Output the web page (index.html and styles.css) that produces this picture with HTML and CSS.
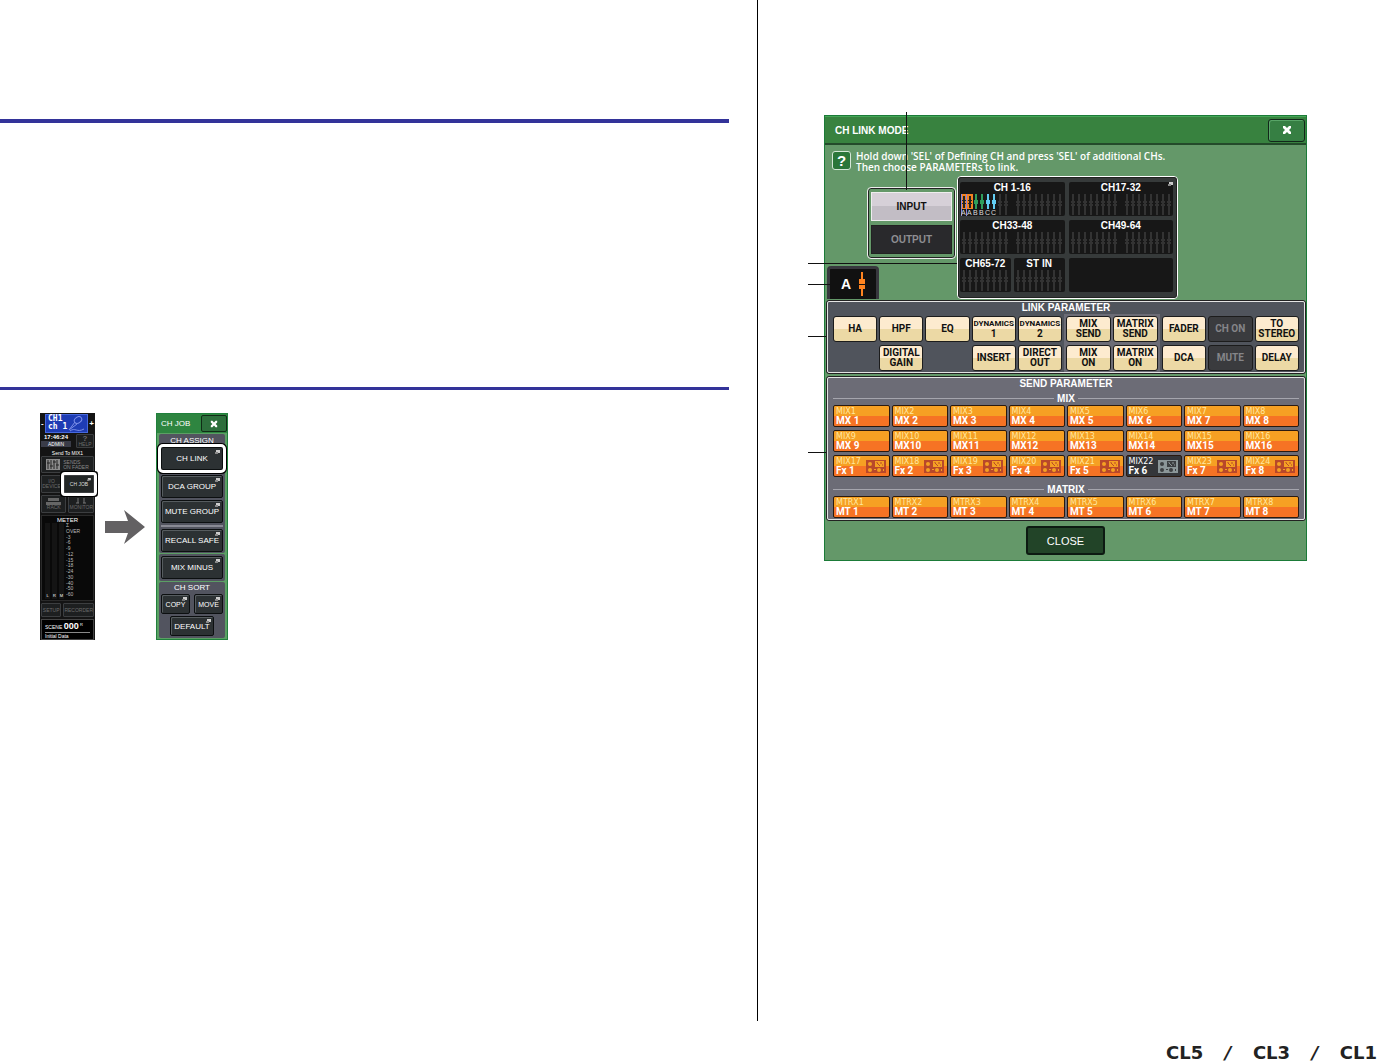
FILE: index.html
```html
<!DOCTYPE html>
<html lang="en">

<head>
    <meta charset="UTF-8">
    <meta name="viewport" content="width=device-width, initial-scale=1.0">
    <title>CH LINK MODE</title>

    <link rel="stylesheet" href="styles.css">
</head>

<body>
    <!-- shared shapes -->
    <svg class="defs" width="0" height="0" aria-hidden="true">
        <symbol id="fader" viewBox="0 0 6 21">
            <path d="M2 0h2v21H2z" fill="currentColor" />
            <path d="M1 7h4v2H1zM1 10h4v2H1z" fill="currentColor" />
        </symbol>
        <symbol id="faders" viewBox="0 0 48 21">
            <use href="#fader" x="0" width="6" height="21" />
            <use href="#fader" x="6" width="6" height="21" />
            <use href="#fader" x="12" width="6" height="21" />
            <use href="#fader" x="18" width="6" height="21" />
            <use href="#fader" x="24" width="6" height="21" />
            <use href="#fader" x="30" width="6" height="21" />
            <use href="#fader" x="36" width="6" height="21" />
            <use href="#fader" x="42" width="6" height="21" />
        </symbol>
        <symbol id="cross" viewBox="0 0 10 10">
            <path d="M1 1h2l2 2 2-2h2v2L7 5l2 2v2H7L5 7 3 9H1V7l2-2-2-2z" fill="#fff" />
        </symbol>
        <symbol id="popup" viewBox="0 0 5 4">
            <path d="M1 0h4v3H1z" fill="#ccc" /><path d="M0 2h3v2H0z" fill="#888" />
        </symbol>
        <symbol id="fx" viewBox="0 0 20 13">
            <path d="M0 0h20v13H0z" fill="currentColor" />
            <path d="M9 1h9v6H9z" fill="var(--knob)" />
            <path d="M11 2v1l3 3M15 2v2M16 5h1" fill="none" stroke="currentColor" />
            <g fill="var(--knob)">
                <circle cx="4" cy="4" r="2" /><circle cx="4" cy="10" r="2" />
                <circle cx="13" cy="10" r="2" /><path d="M8 9h2v1H8zM17 9h1v2h-1z" />
            </g>
        </symbol>
    </svg>

    <main class="page">
        <section class="column column--left">
            <hr class="rule rule--first">
            <hr class="rule rule--second">

            <div class="steps">
                <!-- function access area -->
                <div class="access">
                    <div class="access__channel">
                        <span>-</span>
                        <div class="access__name">CH1<br>ch 1
                            <svg class="access__mic" width="18" height="16" viewBox="0 0 18 16" fill="none" stroke="#7c8fe8">
                                <ellipse cx="10" cy="4" rx="4" ry="3" transform="rotate(-35 10 4)" />
                                <path d="M7 6L1 14l8-6M2 15c5-4 7 2 14-2" />
                            </svg>
                        </div>
                        <span>+</span>
                    </div>
                    <div class="access__status">
                        <div>
                            <div class="access__time">17:46:24</div>
                            <div class="access__user">ADMIN</div>
                        </div>
                        <button class="mini mini--help"><b>?</b>HELP</button>
                    </div>
                    <div class="access__send">Send To MIX1</div>
                    <button class="mini mini--sends">
                        <svg width="14" height="11" viewBox="0 0 14 11"><path d="M0 0h14v11H0z" fill="#8b8b8b" /><path d="M2 1v9M5 1v9M8 1v9M11 1v9M1 4h3M4 7h3M7 3h3M10 6h3" stroke="#222" /></svg>
                        <span>SENDS<br>ON FADER</span>
                    </button>
                    <div class="access__pair">
                        <button class="mini">I/O<br>DEVICE</button>
                        <button class="mini mini--job">CH JOB<svg class="popup" width="4" height="3"><use href="#popup" /></svg></button>
                    </div>
                    <div class="access__pair">
                        <button class="mini"><svg width="15" height="7" viewBox="0 0 15 7"><path d="M2 0h11v3H2zM0 4h15v3H0z" fill="#666" /></svg>RACK</button>
                        <button class="mini"><svg width="12" height="7" viewBox="0 0 12 7"><path d="M3 0v5M9 0v5M1 5h3M8 5h3" stroke="#777" fill="none" /></svg>MONITOR</button>
                    </div>
                    <div class="meter">
                        <div class="meter__title">METER</div>
                        <div class="meter__body">
                            <div class="meter__bar">L</div>
                            <div class="meter__bar">R</div>
                            <div class="meter__bar">M</div>
                            <div class="meter__scale">
                                <span>Σ</span><span>OVER</span><span>-3</span><span>-6</span><span>-9</span><span>-12</span><span>-15</span><span>-18</span><span>-24</span><span>-30</span><span>-40</span><span>-50</span><span>-60</span>
                            </div>
                        </div>
                    </div>
                    <div class="access__pair access__pair--low">
                        <button class="mini">SETUP</button>
                        <button class="mini">RECORDER</button>
                    </div>
                    <div class="scene">
                        <div class="scene__number">SCENE <b>000</b> <sup>R</sup></div>
                        <div>Initial Data</div>
                    </div>
                </div>

                <svg class="steps__arrow" width="41" height="34" viewBox="0 0 41 34">
                    <path d="M0 11h23L19 0l21 17-21 17 4-11H0z" fill="#636163" />
                </svg>

                <!-- CH JOB menu -->
                <div class="job">
                    <div class="job__bar">
                        <span>CH JOB</span>
                        <button class="job__close" aria-label="Close menu"><svg width="8" height="8"><use href="#cross" /></svg></button>
                    </div>
                    <div class="job__group job__group--assign">
                        <div class="job__label">CH ASSIGN</div>
                        <button class="key key--marked">CH LINK<svg class="popup" width="5" height="4"><use href="#popup" /></svg></button>
                        <button class="key">DCA GROUP<svg class="popup" width="5" height="4"><use href="#popup" /></svg></button>
                        <button class="key">MUTE GROUP<svg class="popup" width="5" height="4"><use href="#popup" /></svg></button>
                        <div class="job__divider"></div>
                        <button class="key">RECALL SAFE<svg class="popup" width="5" height="4"><use href="#popup" /></svg></button>
                    </div>
                    <div class="job__group">
                        <button class="key">MIX MINUS<svg class="popup" width="5" height="4"><use href="#popup" /></svg></button>
                    </div>
                    <div class="job__group">
                        <div class="job__label">CH SORT</div>
                        <div class="job__pair">
                            <button class="key key--short">COPY<svg class="popup" width="5" height="4"><use href="#popup" /></svg></button>
                            <button class="key key--short">MOVE<svg class="popup" width="5" height="4"><use href="#popup" /></svg></button>
                        </div>
                        <button class="key key--default">DEFAULT<svg class="popup" width="5" height="4"><use href="#popup" /></svg></button>
                    </div>
                </div>
            </div>
        </section>

        <section class="column column--right">
            <div class="figure">
                <div class="dialog">
                    <header class="dialog__bar">
                        <span>CH LINK MODE</span>
                        <button class="dialog__x" aria-label="Close window"><svg width="10" height="10"><use href="#cross" /></svg></button>
                    </header>

                    <div class="hint">
                        <span class="hint__icon">?</span>
                        <p class="hint__text">Hold down 'SEL' of Defining CH and press 'SEL' of additional CHs.<br>Then choose PARAMETERs to link.</p>
                    </div>

                    <div class="select">
                        <div class="select__side">
                            <div class="switch">
                                <button class="switch__item switch__item--on">INPUT</button>
                                <button class="switch__item">OUTPUT</button>
                            </div>
                            <div class="tab">A
                                <svg width="6" height="24" viewBox="0 0 6 24"><path d="M2 0h2v24H2z" fill="#ff8420" /><path d="M0 7h6v5H0zM0 13h6v4H0z" fill="#ff8420" /><path d="M0 12h6v1H0z" fill="#111" /></svg>
                            </div>
                        </div>
                        <div class="overview">
                            <div class="bank">
                                <div>CH 1-16</div>
                                <div class="bank__strips">
                                    <svg width="48" height="22" viewBox="0 0 48 22">
                                        <path d="M0 0h12v15H0z" fill="#f58220" />
                                        <path d="M5 0h1v22H5zM0 0h1v22H0z" fill="#8c86d8" />
                                        <path d="M2 2h2v12H2zM8 2h2v12H8zM1 6h4v1H1zM7 6h4v1H7zM1 9h4v1H1zM7 9h4v1H7z" fill="#222" />
                                        <path d="M14 0h2v15h-2zM13 6h4v4h-4zM20 0h2v15h-2zM19 6h4v4h-4z" fill="#2f9e5b" />
                                        <path d="M26 0h2v15h-2zM25 6h4v4h-4zM32 0h2v15h-2zM31 6h4v4h-4z" fill="#62cdf2" />
                                        <g color="#333"><use href="#fader" x="36" width="6" height="21" /><use href="#fader" x="42" width="6" height="21" /></g>
                                        <g fill="#ddd" class="bank__letters"><text x="0" y="21">A</text><text x="6" y="21">A</text><text x="12" y="21">B</text><text x="18" y="21">B</text><text x="24" y="21">C</text><text x="30" y="21">C</text></g>
                                    </svg>
                                    <svg width="48" height="21"><use href="#faders" /></svg>
                                </div>
                            </div>
                            <div class="bank">
                                <div>CH17-32</div>
                                <div class="bank__strips"><svg width="48" height="21"><use href="#faders" /></svg><svg width="48" height="21"><use href="#faders" /></svg></div>
                                <svg class="popup" width="5" height="4"><use href="#popup" /></svg>
                            </div>
                            <div class="bank">
                                <div>CH33-48</div>
                                <div class="bank__strips"><svg width="48" height="21"><use href="#faders" /></svg><svg width="48" height="21"><use href="#faders" /></svg></div>
                            </div>
                            <div class="bank">
                                <div>CH49-64</div>
                                <div class="bank__strips"><svg width="48" height="21"><use href="#faders" /></svg><svg width="48" height="21"><use href="#faders" /></svg></div>
                            </div>
                            <div class="overview__half">
                                <div class="bank">
                                    <div>CH65-72</div>
                                    <div class="bank__strips"><svg width="48" height="21"><use href="#faders" /></svg></div>
                                </div>
                                <div class="bank">
                                    <div>ST IN</div>
                                    <div class="bank__strips"><svg width="48" height="21"><use href="#faders" /></svg></div>
                                </div>
                            </div>
                            <div class="bank"></div>
                        </div>
                    </div>

                    <div class="panel panel--link">
                        <h2 class="panel__title">LINK PARAMETER</h2>
                        <div class="params">
                            <div class="params__group params__group--five">
                                <button class="param">HA</button>
                                <button class="param">HPF</button>
                                <button class="param">EQ</button>
                                <button class="param"><span class="param__long">DYNAMICS</span>1</button>
                                <button class="param"><span class="param__long">DYNAMICS</span>2</button>
                                <span></span>
                                <button class="param">DIGITAL<br>GAIN</button>
                                <span></span>
                                <button class="param">INSERT</button>
                                <button class="param">DIRECT<br>OUT</button>
                            </div>
                            <div class="params__group params__group--two">
                                <button class="param">MIX<br>SEND</button>
                                <button class="param">MATRIX<br>SEND</button>
                                <button class="param">MIX<br>ON</button>
                                <button class="param">MATRIX<br>ON</button>
                            </div>
                            <div class="params__group params__group--three">
                                <button class="param">FADER</button>
                                <button class="param param--off">CH ON</button>
                                <button class="param">TO<br>STEREO</button>
                                <button class="param">DCA</button>
                                <button class="param param--off">MUTE</button>
                                <button class="param">DELAY</button>
                            </div>
                        </div>
                    </div>

                    <div class="panel panel--send">
                        <h2 class="panel__title">SEND PARAMETER</h2>
                        <h3 class="panel__line">MIX</h3>
                        <div class="sends">
                            <button class="send"><span>MIX1</span><b>MX 1</b></button>
                            <button class="send"><span>MIX2</span><b>MX 2</b></button>
                            <button class="send"><span>MIX3</span><b>MX 3</b></button>
                            <button class="send"><span>MIX4</span><b>MX 4</b></button>
                            <button class="send"><span>MIX5</span><b>MX 5</b></button>
                            <button class="send"><span>MIX6</span><b>MX 6</b></button>
                            <button class="send"><span>MIX7</span><b>MX 7</b></button>
                            <button class="send"><span>MIX8</span><b>MX 8</b></button>
                            <button class="send"><span>MIX9</span><b>MX 9</b></button>
                            <button class="send"><span>MIX10</span><b>MX10</b></button>
                            <button class="send"><span>MIX11</span><b>MX11</b></button>
                            <button class="send"><span>MIX12</span><b>MX12</b></button>
                            <button class="send"><span>MIX13</span><b>MX13</b></button>
                            <button class="send"><span>MIX14</span><b>MX14</b></button>
                            <button class="send"><span>MIX15</span><b>MX15</b></button>
                            <button class="send"><span>MIX16</span><b>MX16</b></button>
                            <button class="send"><span>MIX17</span><b>Fx 1</b><svg class="send__fx" width="20" height="13"><use href="#fx" /></svg></button>
                            <button class="send"><span>MIX18</span><b>Fx 2</b><svg class="send__fx" width="20" height="13"><use href="#fx" /></svg></button>
                            <button class="send"><span>MIX19</span><b>Fx 3</b><svg class="send__fx" width="20" height="13"><use href="#fx" /></svg></button>
                            <button class="send"><span>MIX20</span><b>Fx 4</b><svg class="send__fx" width="20" height="13"><use href="#fx" /></svg></button>
                            <button class="send"><span>MIX21</span><b>Fx 5</b><svg class="send__fx" width="20" height="13"><use href="#fx" /></svg></button>
                            <button class="send send--off"><span>MIX22</span><b>Fx 6</b><svg class="send__fx" width="20" height="13"><use href="#fx" /></svg></button>
                            <button class="send"><span>MIX23</span><b>Fx 7</b><svg class="send__fx" width="20" height="13"><use href="#fx" /></svg></button>
                            <button class="send"><span>MIX24</span><b>Fx 8</b><svg class="send__fx" width="20" height="13"><use href="#fx" /></svg></button>
                        </div>
                        <h3 class="panel__line panel__line--matrix">MATRIX</h3>
                        <div class="sends">
                            <button class="send"><span>MTRX1</span><b>MT 1</b></button>
                            <button class="send"><span>MTRX2</span><b>MT 2</b></button>
                            <button class="send"><span>MTRX3</span><b>MT 3</b></button>
                            <button class="send"><span>MTRX4</span><b>MT 4</b></button>
                            <button class="send"><span>MTRX5</span><b>MT 5</b></button>
                            <button class="send"><span>MTRX6</span><b>MT 6</b></button>
                            <button class="send"><span>MTRX7</span><b>MT 7</b></button>
                            <button class="send"><span>MTRX8</span><b>MT 8</b></button>
                        </div>
                    </div>

                    <button class="dialog__close">CLOSE</button>
                </div>

                <!-- callout lines over the dialog -->
                <i class="callout callout--switch"></i>
                <i class="callout callout--overview"></i>
                <i class="callout callout--tab"></i>
                <i class="callout callout--link"></i>
                <i class="callout callout--send"></i>
            </div>
        </section>
    </main>

    <footer class="footer">
        <div class="brand"><span>CL5</span><i>/</i><span>CL3</span><i>/</i><span>CL1</span></div>
    </footer>
</body>

</html>
```
FILE: styles.css
```css
* {
    box-sizing: border-box;
}

body {
    margin: 0;
    background: #fff;
    font-family: "Liberation Sans", Arial, sans-serif;
    color: #fff;
}

button {
    margin: 0;
    padding: 0;
    font-family: inherit;
    color: inherit;
    cursor: pointer;
}

h2, h3, p {
    margin: 0;
}

svg {
    display: block;
}

.defs {
    position: absolute;
}

.page {
    display: grid;
    grid-template-columns: 758fr 619fr;
    min-height: 1021px;
}

.column--left {
    border-right: 1px solid #000;
    padding-top: 119px;
}

.column--right {
    padding: 115px 70px 0 66px;
}

/* blue section rules */
.rule {
    margin: 0 28px 0 0;
    border: 0;
    height: 4px;
    background: #333399;
}

.rule--second {
    margin-top: 264px;
    height: 3px;
}

.steps {
    display: flex;
    align-items: center;
    padding: 23px 0 0 40px;
}

.steps__arrow {
    margin: 0 10px;
}

.popup {
    position: absolute;
    top: 2px;
    right: 2px;
}

/* function access area */
.access {
    width: 55px;
    height: 227px;
    background: #141414;
    font-size: 5px;
    line-height: 6px;
    padding: 1px;
}

.access__channel {
    display: flex;
    justify-content: space-between;
    align-items: center;
    font-size: 8px;
    font-weight: bold;
}

.access__name {
    position: relative;
    width: 43px;
    height: 19px;
    padding-left: 2px;
    border: 1px solid #4668dd;
    background: #1e3cb4;
    font: bold 8px/8px "DejaVu Sans Mono", monospace;
}

.access__mic {
    position: absolute;
    top: 1px;
    right: 1px;
}

.access__status {
    display: flex;
    justify-content: space-between;
    height: 16px;
    margin-top: 1px;
    text-align: center;
}

.access__time {
    font-size: 6px;
    line-height: 7px;
    font-weight: bold;
}

.access__user {
    width: 30px;
    background: #3a3c48;
}

.access__send {
    text-align: center;
    height: 6px;
}

.mini {
    position: relative;
    display: flex;
    flex-direction: column;
    align-items: center;
    justify-content: center;
    flex: 1;
    border: 1px solid #3c3e40;
    border-radius: 1px;
    background: #1d1f20;
    color: #6c6c6c;
    font-size: 5px;
    line-height: 5px;
}

.mini--help {
    flex: 0 0 18px;
    height: 14px;
}

.mini--help b {
    font-size: 8px;
    line-height: 7px;
}

.mini--sends {
    flex-direction: row;
    gap: 3px;
    width: 100%;
    height: 17px;
    color: #888;
    text-align: left;
}

.access__pair {
    display: flex;
    gap: 2px;
    height: 18px;
    margin-top: 2px;
}

.access__pair--low {
    height: 14px;
}

.mini--job {
    flex: 0 0 30px;
    color: #ddd;
    background: #222626;
    outline: 3px solid #fff;
    box-shadow: 0 0 0 4px #000;
    z-index: 1;
}

.meter {
    height: 86px;
    margin-top: 2px;
    padding: 1px 3px;
    border: 1px solid #2a2a2a;
    background: #090909;
}

.meter__title {
    text-align: center;
    font-size: 6px;
    line-height: 6px;
}

.meter__body {
    display: flex;
    gap: 2px;
}

.meter__bar {
    display: flex;
    align-items: flex-end;
    justify-content: center;
    width: 5px;
    height: 76px;
    background: #141414;
    font-size: 4px;
}

.meter__scale {
    display: flex;
    flex-direction: column;
    justify-content: space-between;
    height: 74px;
    line-height: 5px;
    color: #bbb;
}

.scene {
    height: 21px;
    margin-top: 2px;
    padding: 2px 3px;
    border: 1px solid #444;
    background: #000;
}

.scene__number {
    border-bottom: 1px solid #888;
    line-height: 9px;
}

.scene__number b {
    font-size: 9px;
}

.scene__number sup {
    font-size: 4px;
    line-height: 4px;
}

/* CH JOB menu */
.job {
    display: flex;
    flex-direction: column;
    width: 72px;
    height: 227px;
    border: 1px solid #20803c;
    background: #5b9f64;
    font-size: 8px;
    line-height: 9px;
}

.job__bar {
    display: flex;
    align-items: center;
    justify-content: space-between;
    height: 19px;
    padding-left: 4px;
    background: #2e8540;
}

.job__close {
    display: flex;
    align-items: center;
    justify-content: center;
    width: 26px;
    height: 17px;
    border: 1px solid #102c16;
    border-radius: 2px;
    background: #2d6f3c;
}

.job__group {
    display: flex;
    flex-direction: column;
    align-items: center;
    gap: 2px;
    margin: 1px 2px 0;
    padding: 2px;
    border-radius: 2px;
    background: #52545f;
}

.job__group--assign {
    padding-bottom: 1px;
    padding-top: 3px;
}

.job__label {
    line-height: 8px;
}

.job__divider {
    width: 100%;
    height: 2px;
    background: #898a94;
}

.job__pair {
    display: flex;
    gap: 4px;
}

.key {
    position: relative;
    width: 62px;
    height: 23px;
    border: 1px solid #0c0f10;
    border-radius: 2px;
    background: #2c3133;
    box-shadow: inset 1px 1px 0 #565c5f;
    font-size: 8px;
}

.key--marked {
    margin-bottom: 3px;
    outline: 3px solid #fff;
    box-shadow: 0 0 0 4px #000;
}

.key--short {
    width: 29px;
    height: 20px;
    font-size: 7px;
}

.key--default {
    width: 44px;
    height: 20px;
}

/* CH LINK MODE window */
.figure {
    position: relative;
}

.dialog {
    display: flex;
    flex-direction: column;
    padding-bottom: 5px;
    border: 1px solid #1b7b38;
    background: #649869;
}

.dialog__bar {
    display: flex;
    align-items: center;
    justify-content: space-between;
    height: 29px;
    padding: 0 1px 0 10px;
    border-top: 1px solid #45a757;
    border-bottom: 2px solid #234a2a;
    background: #38823f;
    font-size: 10px;
    font-weight: bold;
}

.dialog__x {
    display: flex;
    align-items: center;
    justify-content: center;
    width: 37px;
    height: 23px;
    border: 1px solid #12261a;
    border-radius: 3px;
    background: #367f43;
    box-shadow: inset 1px 1px 0 #58a567;
}

.hint {
    display: flex;
    gap: 5px;
    padding: 6px 7px 0;
}

.hint__text {
    font: 600 10px/11px "Open Sans", sans-serif;
    white-space: nowrap;
}

.hint__icon {
    width: 19px;
    height: 19px;
    border: 1px solid #d5e7d7;
    border-radius: 3px;
    background: #2b7639;
    font-size: 15px;
    font-weight: bold;
    line-height: 17px;
    text-align: center;
}

.select {
    display: flex;
    gap: 2px;
    padding: 3px 2px 0;
}

.select__side {
    display: flex;
    flex-direction: column;
    justify-content: space-between;
    width: 128px;
    padding-top: 12px;
}

.switch {
    display: flex;
    flex-direction: column;
    gap: 4px;
    align-self: flex-end;
    width: 87px;
    padding: 3px 2px;
    border: 1px solid #222;
    border-radius: 3px;
    outline: 1px solid #eee;
}

.switch__item {
    height: 29px;
    border: 1px solid #222;
    background: #29292c;
    color: #8e8e92;
    font-size: 10px;
    font-weight: bold;
}

.switch__item--on {
    border-color: #eee;
    background: linear-gradient(#d6d0d8 50%, #c2bdc5 50%);
    color: #111;
}

.tab {
    display: flex;
    align-items: center;
    justify-content: center;
    gap: 8px;
    width: 52px;
    height: 33px;
    border: 3px solid #38383e;
    border-bottom: 0;
    border-radius: 4px 4px 0 0;
    background: #111;
    font-size: 14px;
    font-weight: bold;
}

.overview {
    display: grid;
    grid-template-columns: 1fr 1fr;
    grid-auto-rows: 34px;
    gap: 4px;
    width: 221px;
    padding: 5px 4px 6px 2px;
    border: 1px solid #fff;
    border-radius: 4px;
    outline: 1px solid #222;
    outline-offset: -2px;
    background: #363a3a;
}

.overview__half {
    display: grid;
    grid-template-columns: 1fr 1fr;
    gap: 3px;
}

.bank {
    position: relative;
    border-radius: 2px;
    background: #171717;
    font-size: 10px;
    font-weight: bold;
    line-height: 12px;
    text-align: center;
}

.bank .popup {
    top: 0;
    right: 0;
}

.bank__strips {
    display: flex;
    justify-content: center;
    gap: 6px;
    color: #333;
}

.bank__letters {
    font-size: 7px;
    font-weight: normal;
}

.panel {
    margin: 1px 0 0 1px;
    padding: 0 6px;
    border: 1px solid #222;
    border-radius: 3px;
    outline: 1px solid #e4e4e4;
    outline-offset: -2px;
}

.panel--link {
    padding-bottom: 2px;
    background: #50545c;
}

.panel--send {
    margin-top: 2px;
    padding-bottom: 2px;
    background: #6c6c76;
}

.panel__title {
    margin-bottom: 2px;
    font-size: 10px;
    line-height: 13px;
    text-align: center;
}

.params {
    display: grid;
    grid-template-columns: 5fr 2fr 3fr;
    gap: 4px;
}

.params__group {
    display: grid;
    grid-auto-rows: 26px;
    gap: 3px 2px;
}

.params__group--five {
    grid-template-columns: repeat(5, 1fr);
}

.params__group--two {
    grid-template-columns: repeat(2, 1fr);
    background: #6c6c76;
    box-shadow: 0 0 0 2px #6c6c76;
}

.params__group--three {
    grid-template-columns: repeat(3, 1fr);
}

.param {
    display: flex;
    flex-direction: column;
    align-items: center;
    justify-content: center;
    min-width: 0;
    border: 1px solid #1c1c1c;
    border-radius: 3px;
    background: linear-gradient(#fdebcf 50%, #ecd9a5 50%);
    color: #111;
    font: bold 10px/10px Roboto, sans-serif;
    white-space: nowrap;
}

.param__long {
    font-size: 8px;
}

.param--off {
    background: #3a3b3e;
    color: #858589;
}

/* group name with a line on both sides */
.panel__line {
    display: flex;
    align-items: center;
    gap: 3px;
    font-size: 10px;
    line-height: 13px;
}

.panel__line::before,
.panel__line::after {
    content: "";
    flex: 1;
    height: 1px;
    background: #a5a5ad;
}

.panel__line--matrix {
    margin-top: 6px;
}

.sends {
    display: grid;
    grid-template-columns: repeat(8, 1fr);
    grid-auto-rows: 22px;
    gap: 3px 2px;
}

.send {
    --knob: #f5a023;
    position: relative;
    display: flex;
    flex-direction: column;
    padding: 1px 2px;
    border: 1px solid #2a1a10;
    border-radius: 2px;
    background: linear-gradient(#f6a023 50%, #f67324 50%);
    text-align: left;
}

.send span {
    color: #ffe7a0;
    font: 8px/9px "DejaVu Sans", sans-serif;
}

.send b {
    font: bold 10px/9px Roboto, sans-serif;
}

.send--off {
    --knob: #3c3f41;
    background: #34363a;
}

.send--off span {
    color: #fff;
}

.send__fx {
    position: absolute;
    top: 4px;
    right: 3px;
    color: #b8482a;
}

.send--off .send__fx {
    color: #8b9698;
}

.dialog__close {
    align-self: center;
    width: 79px;
    height: 29px;
    margin-top: 5px;
    border: 2px solid #0d1a12;
    border-radius: 3px;
    background: #224428;
    font-size: 11px;
}

/* callout lines */
.callout {
    position: absolute;
    left: -16px;
    height: 1px;
    background: #111;
}

.callout--switch {
    top: -3px;
    left: 82px;
    width: 1px;
    height: 78px;
}

.callout--overview {
    top: 148px;
    width: 149px;
}

.callout--tab {
    top: 169px;
    width: 25px;
}

.callout--link {
    top: 221px;
    width: 18px;
}

.callout--send {
    top: 337px;
    width: 18px;
}

/* product names */
.footer {
    display: flex;
    justify-content: flex-end;
    align-items: flex-end;
    height: 40px;
}

.brand {
    display: flex;
    justify-content: space-between;
    width: 211px;
    color: #222;
    font: bold 18px/17px "DejaVu Sans", sans-serif;
}
```
